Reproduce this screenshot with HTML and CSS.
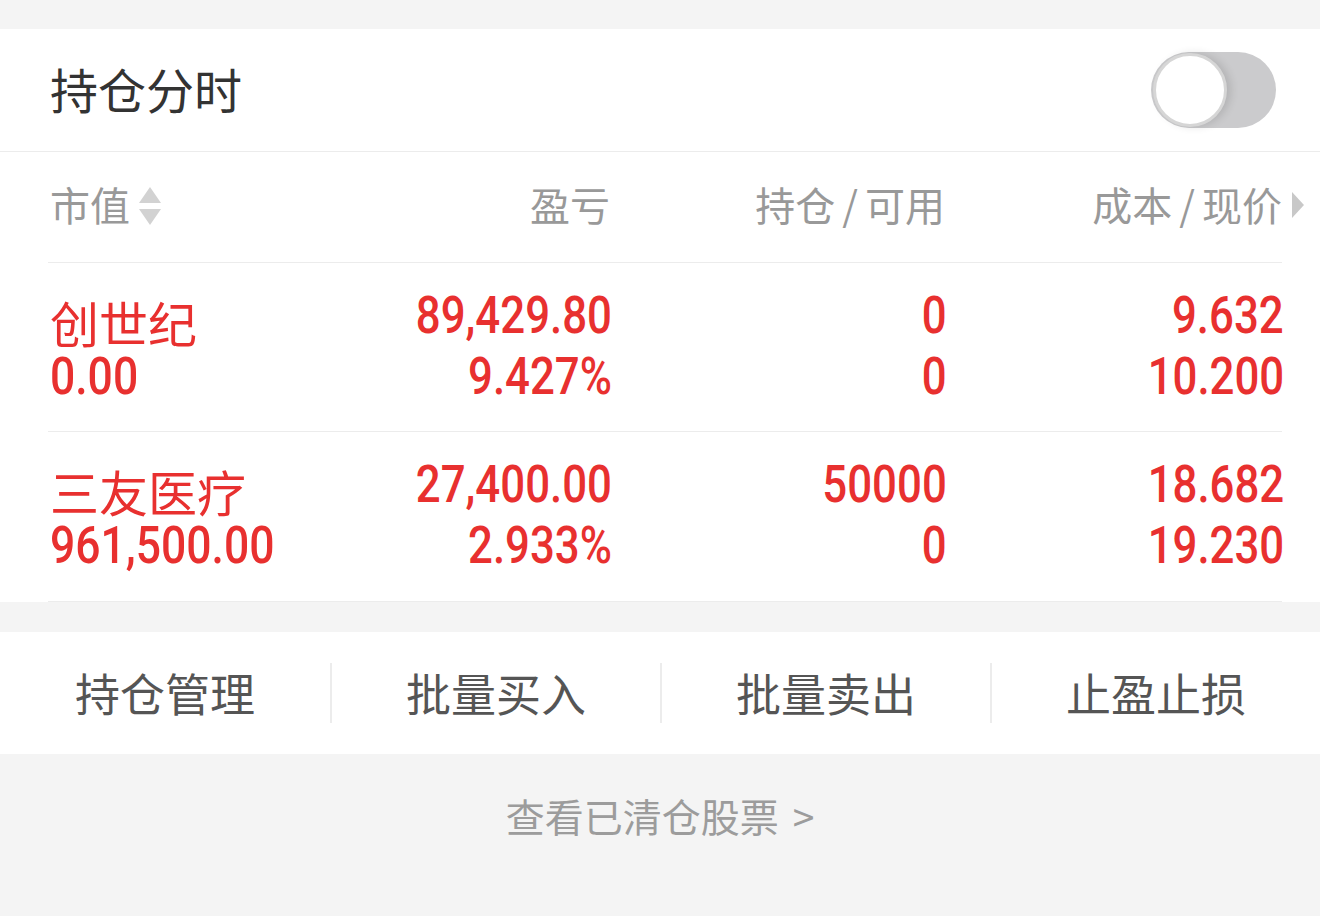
FILE: index.html
```html
<!DOCTYPE html>
<html lang="zh-CN">
<head>
<meta charset="utf-8">
<title>持仓</title>
<link rel="stylesheet" href="styles.css">
</head>
<body>
<div class="gap-top"></div>
<section class="switch-bar">
  <span class="switch-title">持仓分时</span>
  <span class="toggle"><span class="knob"></span></span>
</section>
<section class="table">
  <div class="row head">
    <div class="cell left">市值<span class="sort"><i class="up"></i><i class="down"></i></span></div>
    <div class="cell">盈亏</div>
    <div class="cell">持仓<span class="slash">/</span>可用</div>
    <div class="cell">成本<span class="slash">/</span>现价<i class="more"></i></div>
  </div>
  <div class="row item">
    <div class="cell left"><span class="name">创世纪</span><span class="num">0.00</span></div>
    <div class="cell"><span class="num">89,429.80</span><span class="num">9.427%</span></div>
    <div class="cell"><span class="num">0</span><span class="num">0</span></div>
    <div class="cell"><span class="num">9.632</span><span class="num">10.200</span></div>
  </div>
  <div class="row item">
    <div class="cell left"><span class="name">三友医疗</span><span class="num">961,500.00</span></div>
    <div class="cell"><span class="num">27,400.00</span><span class="num">2.933%</span></div>
    <div class="cell"><span class="num">50000</span><span class="num">0</span></div>
    <div class="cell"><span class="num">18.682</span><span class="num">19.230</span></div>
  </div>
</section>
<nav class="actions">
  <div class="action">持仓管理</div>
  <div class="action">批量买入</div>
  <div class="action">批量卖出</div>
  <div class="action">止盈止损</div>
</nav>
<div class="cleared">查看已清仓股票<span class="arrow">&gt;</span></div>
</body>
</html>
```
FILE: styles.css
```css
html, body {
  margin: 0;
  padding: 0;
}
body {
  background: #f4f4f4;
  font-family: "Noto Sans CJK SC", "Noto Sans", sans-serif;
  width: 1320px;
  height: 916px;
  overflow: hidden;
}
.gap-top {
  height: 29px;
}
.switch-bar {
  height: 122px;
  background: #fff;
  border-bottom: 1px solid #ececec;
  display: flex;
  align-items: center;
  justify-content: space-between;
  padding: 0 44px 0 50px;
}
.switch-title {
  font-size: 48px;
  color: #333;
  line-height: 1;
  margin-top: -4px;
}
.toggle {
  width: 125px;
  height: 76px;
  border-radius: 38px;
  background: #cbcbcd;
  display: flex;
  align-items: center;
  padding-left: 2px;
  box-sizing: border-box;
}
.knob {
  width: 68px;
  height: 68px;
  border-radius: 50%;
  background: #fff;
  border: 3px solid #d6d6d6;
  box-shadow: 4px 0 8px rgba(0,0,0,0.12);
}
.table {
  background: #fff;
  padding: 0 38px 0 48px;
}
.row {
  display: grid;
  grid-template-columns: 250px 312px 335px 337px;
  border-bottom: 1px solid #ececec;
}
.row.head {
  height: 110px;
  align-items: center;
}
.head .cell {
  font-size: 40px;
  color: #999;
  line-height: 1;
  display: flex;
  justify-content: flex-end;
  align-items: center;
  margin-top: -6px;
}
.head .cell.left {
  justify-content: flex-start;
  padding-left: 2px;
}
.slash {
  margin: 0 7px;
}
.sort {
  display: flex;
  flex-direction: column;
  gap: 6px;
  margin-left: 9px;
  margin-top: 4px;
}
.sort i {
  display: block;
  width: 0;
  height: 0;
  border-left: 11px solid transparent;
  border-right: 11px solid transparent;
}
.sort .up {
  border-bottom: 16px solid #d2d2d2;
}
.sort .down {
  border-top: 16px solid #d2d2d2;
}
.more {
  display: block;
  width: 0;
  height: 0;
  border-top: 13px solid transparent;
  border-bottom: 13px solid transparent;
  border-left: 12px solid #c8c8c8;
  margin-left: 10px;
  margin-right: -22px;
  margin-top: 2px;
}
.row.item {
  height: 146px;
  padding-top: 22px;
}
.row.item:last-child {
  height: 147px;
}
.item .cell {
  display: flex;
  flex-direction: column;
  align-items: flex-end;
  color: #e8302f;
}
.item .cell.left {
  align-items: flex-start;
  padding-left: 2px;
}
.name {
  font-size: 49px;
  line-height: 46px;
  margin: 14px 0 1px;
}
.num {
  font-family: Roboto, "DejaVu Sans Condensed", sans-serif;
  font-weight: 500;
  font-size: 52px;
  line-height: 61px;
  height: 61px;
  margin-right: -2px;
  transform: scaleX(0.842);
  transform-origin: right center;
}
.left .num {
  margin-right: 0;
  transform: scaleX(0.855);
  transform-origin: left center;
}
.actions {
  margin-top: 30px;
  height: 122px;
  background: #fff;
  display: grid;
  grid-template-columns: repeat(4, 1fr);
  align-items: center;
}
.action {
  font-size: 45px;
  color: #555;
  line-height: 60px;
  text-align: center;
  border-left: 2px solid #ececec;
}
.action:first-child {
  border-left: none;
}
.cleared {
  text-align: center;
  font-size: 39px;
  color: #9c9c9c;
  padding-top: 36px;
  line-height: 50px;
}
.arrow {
  margin-left: 14px;
}
```
